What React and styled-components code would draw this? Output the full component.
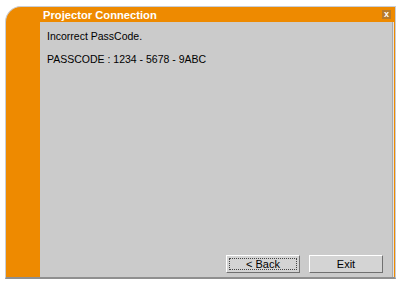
import React from 'react';
import styled, { createGlobalStyle } from 'styled-components';

const GlobalStyle = createGlobalStyle`
  body {
    margin: 0;
    background: #ffffff;
    font-family: Tahoma, "Liberation Sans", sans-serif;
  }
`;

const Page = styled.div`
  width: 401px;
  height: 282px;
  padding: 6px 4px 0 5px;
  box-sizing: border-box;
`;

const Window = styled.div`
  width: 391px;
  height: 273px;
  display: flex;
  flex-direction: column;
  background: #ee8a00;
  border: 1px solid #c9ced6;
  border-top-left-radius: 16px;
  border-bottom: 2px solid #8f8f8f;
  box-sizing: border-box;
  overflow: hidden;
`;

const TitleBar = styled.div`
  height: 15px;
  flex: none;
  display: flex;
  align-items: center;
  justify-content: space-between;
  padding: 0 4px 0 37px;
  color: #ffffff;
  font-weight: bold;
  font-size: 11.2px;
`;

const CloseBox = styled.span`
  width: 9px;
  height: 9px;
  background: #b77a2a;
  color: #fff;
  font-size: 9px;
  line-height: 9px;
  text-align: center;
  font-weight: bold;
`;

const Body = styled.div`
  flex: 1;
  display: flex;
`;

const Band = styled.div`
  width: 34px;
  flex: none;
  margin-bottom: 3px;
`;

const Content = styled.div`
  flex: 1;
  background: #cbcbcb;
  border-right: 1px solid #aaaaaa;
  box-shadow: 1px 0 0 #e2e2e2;
  margin-right: 2px;
  display: flex;
  flex-direction: column;
  padding: 8px 9px 0 7px;
  font-size: 10.5px;
  color: #000;
`;

const Line = styled.div`
  height: 13px;
  line-height: 13px;
  margin-bottom: 10px;
`;

const Buttons = styled.div`
  margin-top: auto;
  margin-bottom: 4px;
  display: flex;
  justify-content: flex-end;
  gap: 9px;
`;

const Button = styled.button`
  width: 74px;
  height: 18px;
  padding: 0;
  font: 11px Tahoma, "Liberation Sans", sans-serif;
  color: #000;
  background: #d4d4d4;
  border: 1px solid;
  border-color: #ffffff #707070 #707070 #ffffff;
  outline: ${p => (p.focused ? '1px dotted #444' : 'none')};
  outline-offset: -4px;
`;

export default function App() {
  return (
    <>
      <GlobalStyle />
      <Page>
        <Window>
          <TitleBar>
            <span>Projector Connection</span>
            <CloseBox>x</CloseBox>
          </TitleBar>
          <Body>
            <Band />
            <Content>
              <Line>Incorrect PassCode.</Line>
              <Line>PASSCODE : 1234 - 5678 - 9ABC</Line>
              <Buttons>
                <Button focused>&lt; Back</Button>
                <Button>Exit</Button>
              </Buttons>
            </Content>
          </Body>
        </Window>
      </Page>
    </>
  );
}
